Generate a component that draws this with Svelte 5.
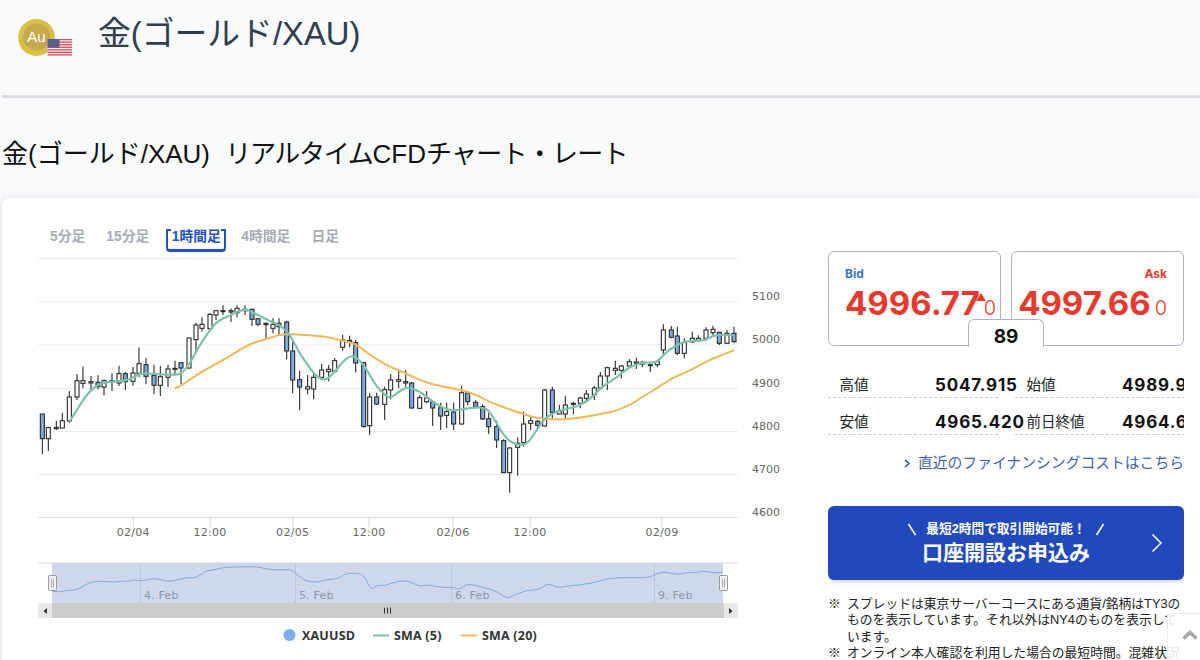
<script>
  const g1 = [[37,372,492,372,446,1],[55,410,483,413,446,0],[79,392,420,412,416,0],[97,368,415,392,414,0],[118,303,398,321,393,0],[141,252,330,272,321,0],[159,230,295,272,280,0],[183,258,302,275,279,0],[204,256,298,277,290,1],[222,268,316,272,291,0],[246,250,303,272,276,0],[267,227,288,251,279,0],[286,246,300,251,275,1],[309,231,287,249,274,0],[327,172,262,221,250,0],[348,204,283,224,259,1],[372,224,313,256,286,1],[391,228,318,260,286,0],[414,224,291,237,262,0],[435,212,252,235,238,0],[453,216,282,218,234,1],[477,144,236,144,234,0],[498,98,185,105,149,0],[516,82,125,103,115,0],[540,70,118,73,116,0],[558,60,90,62,75,0],[579,46,75,62,65,0],[603,55,96,62,66,0],[621,46,82,55,68,0],[645,46,75,58,62,0],[666,56,108,58,88,1],[684,84,108,86,103,1],[708,97,145,100,104,0],[729,85,130,103,115,0],[747,85,135,100,110,0],[770,92,208,96,183,1]];
  const g2 = [[38,157,310,183,270,1],[59,242,360,269,291,1],[83,255,313,290,297,0],[101,252,327,262,297,0],[125,222,265,240,262,0],[146,225,274,238,245,0],[164,204,250,212,244,0],[188,134,182,150,172,0],[209,137,172,151,155,0],[227,150,247,158,219,1],[251,215,413,218,409,1],[269,310,435,321,407,0],[290,308,345,321,342,1],[314,290,390,299,343,0],[332,252,328,270,300,0],[356,243,295,269,274,0],[377,240,290,275,279,0],[395,276,356,279,354,1],[419,316,357,323,355,0],[440,303,340,324,335,0],[458,333,408,336,354,1],[482,338,420,353,378,1],[500,338,415,365,376,0],[521,338,420,366,402,1],[545,287,404,308,402,0],[563,305,345,309,335,1],[587,330,356,337,349,1],[608,343,390,350,387,1],[626,368,432,386,410,1],[650,392,474,410,450,1],[671,448,548,452,548,1],[689,472,608,474,548,0],[713,442,557,460,472,0],[731,365,470,402,458,0],[752,380,420,392,400,0],[773,390,415,394,406,1]];
  const g3 = [[74,297,410,300,408,0],[97,290,390,300,367,1],[118,345,373,364,372,0],[136,318,385,345,372,0],[160,335,373,340,343,0],[181,320,355,324,340,0],[199,300,335,312,325,0],[223,288,330,294,314,0],[241,246,298,258,294,0],[262,230,300,233,258,0],[286,212,255,235,241,0],[304,225,265,228,241,0],[328,207,234,215,228,0],[349,203,237,216,220,0],[367,212,232,217,222,0],[391,222,246,224,226,0],[412,210,232,215,224,0],[430,103,195,120,180,0],[454,108,145,120,142,1],[472,110,196,138,190,1],[493,145,205,157,190,0],[517,125,158,145,156,0],[535,136,156,145,152,0],[558,112,152,120,145,0],[579,107,140,118,128,0],[598,125,165,127,160,1],[621,120,160,130,160,0],[642,110,158,130,155,1]];

  const scale = (arr, ox) => arr.map(c => ({
    x: ox + c[0] / 3,
    wt: 290 + c[1] / 3,
    wb: 290 + c[2] / 3,
    bt: 290 + c[3] / 3,
    bb: 290 + c[4] / 3,
    down: c[5] === 1
  }));
  const candles = [...scale(g1, 30), ...scale(g2, 280), ...scale(g3, 520)];

  const pts = (arr, ox, oy) => arr.map(p => [ox + p[0] / 3, oy + p[1] / 3]);
  const smooth = (p) => {
    let d = `M${p[0][0].toFixed(1)} ${p[0][1].toFixed(1)}`;
    for (let i = 1; i < p.length - 1; i++) {
      const mx = (p[i][0] + p[i + 1][0]) / 2;
      const my = (p[i][1] + p[i + 1][1]) / 2;
      d += ` Q${p[i][0].toFixed(1)} ${p[i][1].toFixed(1)} ${mx.toFixed(1)} ${my.toFixed(1)}`;
    }
    const l = p[p.length - 1];
    return d + ` L${l[0].toFixed(1)} ${l[1].toFixed(1)}`;
  };

  const sma5 = smooth([
    ...pts([[118,395],[141,360],[159,330],[183,300],[204,285],[222,278],[246,275],[267,273],[286,272],[309,263],[327,252],[348,250],[372,252],[391,253],[414,254],[435,254],[453,252],[477,225],[498,185],[516,155],[540,120],[558,98],[579,85],[603,75],[621,65],[645,58],[666,66],[684,75],[708,87],[729,97],[747,105],[770,122]], 30, 290),
    ...pts([[38,150],[59,190],[83,225],[101,250],[125,270],[146,265],[164,245],[188,215],[209,198],[227,200],[251,225],[269,255],[290,290],[314,315],[332,325],[356,305],[377,293],[395,295],[419,305],[440,320],[458,335],[482,350],[500,358],[521,362],[545,358],[563,355],[587,352],[608,353],[626,360],[650,400],[671,435],[689,455],[713,465],[731,463]], 280, 290),
    ...pts([[25,458],[53,415],[74,385],[97,372],[118,362],[136,358],[160,352],[181,345],[199,335],[223,315],[241,295],[262,280],[286,265],[304,250],[328,232],[349,224],[367,218],[391,218],[412,216],[430,195],[454,175],[472,165],[493,155],[517,153],[535,153],[558,148],[579,138],[598,135],[621,135],[642,135]], 520, 290)
  ]);
  const sma20 = smooth([
    ...pts([[435,295],[453,288],[477,270],[498,257],[516,245],[540,232],[579,210],[621,185],[645,170],[666,160],[708,147],[747,135]], 30, 290),
    ...pts([[20,132],[59,134],[83,136],[125,138],[146,142],[188,152],[227,162],[251,180],[290,208],[332,232],[377,250],[419,270],[458,283],[500,292],[545,300],[587,313],[626,335],[671,352],[713,367]], 280, 290),
    ...pts([[60,387],[118,388],[160,386],[223,376],[286,364],[340,340],[367,320],[412,295],[454,265],[493,250],[535,228],[579,205],[621,190],[642,180]], 520, 290)
  ]);
  const navPts = [
    ...pts([[66,243],[90,247],[105,241],[140,240],[160,228],[185,214],[220,214],[250,217],[270,214],[295,214],[310,209],[335,214],[375,203],[412,216],[450,208],[475,202],[497,205],[530,180],[555,180],[580,171],[640,171],[680,169],[710,178],[760,180],[785,178],[820,212],[860,218],[890,208],[925,208],[945,190],[995,190],[1010,210],[1023,241],[1040,225],[1065,228],[1100,213]], 30, 510),
    ...pts([[30,213],[55,230],[80,224],[130,233],[165,232],[180,240],[200,220],[250,232],[295,245],[320,268],[340,255],[355,252],[380,240],[420,240],[443,218],[470,234],[505,228],[580,220],[620,205],[690,202],[750,204],[785,182],[830,195],[860,187],[890,188],[910,182],[945,190],[968,186]], 400, 510)
  ];
  const navLine = smooth(navPts);

  const grid = [302, 345, 388.5, 431.5, 474.5];
  const yLabels = [[5100, 300], [5000, 343], [4900, 386.5], [4800, 429.5], [4700, 472.5], [4600, 515.5]];
  const xLabels = [[133.3, '02/04'], [210, '12:00'], [292.7, '02/05'], [369, '12:00'], [453, '02/06'], [530, '12:00'], [662, '02/09']];
  const navMarks = [[140.5, '4. Feb'], [295.5, '5. Feb'], [451.5, '6. Feb'], [654.5, '9. Feb']];
  const tabs = ['5分足', '15分足', '1時間足', '4時間足', '日足'];
  const flagStripes = [0, 1, 2, 3, 4, 5, 6];
</script>

<div class="page">
  <header class="head">
    <svg class="icon" viewBox="0 0 54 37" width="54" height="37" aria-hidden="true">
      <circle cx="18.5" cy="18.5" r="18.4" fill="#dcbf45" />
      <circle cx="18.7" cy="18" r="13.6" fill="#c5aa50" />
      <text x="18.5" y="22.5" class="au">Au</text>
      <rect x="29.5" y="20" width="24.5" height="16.5" fill="#f4ecec" />
      {#each flagStripes as s}
        <rect x="29.5" y={20 + s * 2.54} width="24.5" height="1.27" fill="#d2505f" />
      {/each}
      <rect x="29.5" y="20" width="12" height="8.6" fill="#55608f" />
    </svg>
    <h1>金(ゴールド/XAU)</h1>
  </header>

  <h2>金(ゴールド/XAU) <span class="k1">リアルタイム</span>CFD<span class="k2">チャート・レート</span></h2>

  <section class="card">
    <div class="chart-col">
      <nav class="tabs">
        {#each tabs as t, i}
          <span class="tab" class:active={i === 2}>{t}</span>
        {/each}
      </nav>
      <svg class="chart" viewBox="30 258 760 402" width="760" height="402">
        <line x1="38" x2="738" y1="258.5" y2="258.5" class="grid" />
        {#each grid as y}
          <line x1="38" x2="738" y1={y} y2={y} class="grid" />
        {/each}
        <line x1="38" x2="738" y1="517.5" y2="517.5" class="axis" />
        {#each xLabels as l}
          <line x1={l[0]} x2={l[0]} y1="517" y2="527" class="axis" />
          <text x={l[0]} y="536" class="xl">{l[1]}</text>
        {/each}
        {#each yLabels as l}
          <text x="752" y={l[1]} class="yl">{l[0]}</text>
        {/each}

        {#each candles as c}
          <line x1={c.x} x2={c.x} y1={c.wt} y2={c.wb} class="wick" />
          <rect x={c.x - 2} y={c.bt} width="4" height={Math.max(c.bb - c.bt, 1)} class={c.down ? 'body down' : 'body'} />
        {/each}
        <path d={sma20} class="sma20" />
        <path d={sma5} class="sma5" />

        <line x1="38" x2="738" y1="563" y2="563" class="navtop" />
        <rect x="52" y="563" width="671" height="40" class="navbg" />
        {#each navMarks as m}
          <line x1={m[0]} x2={m[0]} y1="563" y2="603" class="navgrid" />
          <text x={m[0] + 3.5} y="599" class="navl">{m[1]}</text>
        {/each}
        <path d={navLine} class="navline" />

        <rect x="38" y="603" width="700" height="15" class="sb" />
        <rect x="38" y="603" width="14" height="15" class="sbbtn" />
        <rect x="724" y="603" width="14" height="15" class="sbbtn" />
        <path d="M47 608 L43.5 611 L47 614 Z" class="arrow" />
        <path d="M729 608 L732.5 611 L729 614 Z" class="arrow" />
        <path d="M384.5 607.5v6M387.5 607.5v6M390.5 607.5v6" class="grip" />

        <rect x="48.5" y="575.5" width="8" height="15" rx="1" class="handle" />
        <path d="M51.5 578.5v9M53.5 578.5v9" class="hgrip" />
        <rect x="719.5" y="575.5" width="8" height="15" rx="1" class="handle" />
        <path d="M722.5 578.5v9M724.5 578.5v9" class="hgrip" />

        <circle cx="289.5" cy="635" r="6" class="dot" />
        <text x="302" y="640" class="lg">XAUUSD</text>
        <line x1="373" x2="389" y1="635.5" y2="635.5" class="lg5" />
        <text x="394" y="640" class="lg">SMA (5)</text>
        <line x1="461" x2="477" y1="635.5" y2="635.5" class="lg20" />
        <text x="482" y="640" class="lg">SMA (20)</text>
      </svg>
    </div>

    <aside class="side">
      <div class="quotes">
        <div class="quote">
          <div class="q-label bid">Bid</div>
          <div class="q-price"><span class="big">4996.77</span><span class="small">0</span></div>
          <i class="tri"></i>
        </div>
        <div class="quote">
          <div class="q-label ask">Ask</div>
          <div class="q-price end"><span class="big">4997.66</span><span class="small">0</span></div>
        </div>
        <div class="spread">89</div>
      </div>

      <dl class="stats">
        <div class="stat"><dt>高値</dt><dd>5047.915</dd></div>
        <div class="stat"><dt>始値</dt><dd>4989.935</dd></div>
        <div class="stat"><dt>安値</dt><dd>4965.420</dd></div>
        <div class="stat"><dt>前日終値</dt><dd>4964.625</dd></div>
      </dl>

      <div class="link">
        <svg viewBox="0 0 6 9" width="6" height="9" aria-hidden="true"><path d="M1 .8 5 4.5 1 8.2" /></svg>
        <span>直近のファイナンシングコストはこちら</span>
      </div>

      <div class="cta">
        <div class="cta-text">
          <div class="cta-sub">
            <svg viewBox="0 0 10 13" width="10" height="13" aria-hidden="true"><path d="M1.5 1 8.5 12" /></svg>
            <span>最短2時間で取引開始可能！</span>
            <svg viewBox="0 0 10 13" width="10" height="13" aria-hidden="true"><path d="M8.5 1 1.5 12" /></svg>
          </div>
          <div class="cta-main">口座開設お申込み</div>
        </div>
        <svg class="cta-arrow" viewBox="0 0 12 20" width="12" height="20" aria-hidden="true"><path d="M1.5 1.5 10 10 1.5 18.5" /></svg>
      </div>

      <ul class="notes">
        <li><span class="mark">※</span><span>スプレッドは東京サーバーコースにある通貨/銘柄はTY3の<br />ものを表示しています。それ以外はNY4のものを表示して<br />います。</span></li>
        <li><span class="mark">※</span><span>オンライン本人確認を利用した場合の最短時間。混雑状況</span></li>
      </ul>
    </aside>
  </section>

  <button class="top" aria-label="top">
    <svg viewBox="0 0 16 10" width="16" height="10"><path d="M1.5 8.5 8 2.5l6.5 6" /></svg>
  </button>
</div>

<style>
  :global(html), :global(body) {
    margin: 0;
    height: 660px;
    overflow: hidden;
    background: #f9fafc;
  }
  .page {
    height: 660px;
    overflow: hidden;
    background: #f9fafc;
    font-family: "Liberation Sans", "Noto Sans CJK JP", sans-serif;
    color: #111;
  }
  .head {
    display: flex;
    align-items: flex-start;
    gap: 26px;
    height: 95px;
    margin-left: 2px;
    padding-left: 16px;
    border-bottom: 3px solid #dcdde1;
  }
  .icon { margin-top: 19px; flex: none; }
  .au {
    font: 400 15px "Liberation Sans", sans-serif;
    fill: #fff;
    text-anchor: middle;
  }
  h1 {
    margin: 14px 0 0;
    font-size: 32.8px;
    line-height: 40px;
    font-weight: 400;
    color: #2f3e50;
    white-space: nowrap;
  }
  h2 {
    margin: 36px 0 24px 2px;
    font-size: 26px;
    line-height: 40px;
    font-weight: 400;
    color: #111;
    white-space: nowrap;
  }
  .k1 { margin-left: 8px; letter-spacing: -1.33px; }
  .k2 { letter-spacing: -.75px; }
  .card {
    display: flex;
    margin-left: 2px;
    height: 480px;
    background: #fff;
    border-radius: 8px 0 0 0;
    box-shadow: 0 0 8px rgba(40, 50, 80, .14);
  }
  .chart-col {
    flex: none;
    width: 788px;
    padding-left: 28px;
    box-sizing: border-box;
  }
  .tabs {
    display: flex;
    gap: 11px;
    height: 60px;
    box-sizing: border-box;
    padding: 31px 0 0 15px;
  }
  .tab {
    position: relative;
    height: 23px;
    padding: 1px 5px 0;
    box-sizing: border-box;
    font-size: 13.8px;
    font-weight: 700;
    line-height: 14px;
    color: #a5acb6;
    white-space: nowrap;
  }
  .tab.active {
    margin: 0 -1px 0 1px;
    padding: 1px 3.5px 0;
    color: #2453bd;
    border: 2px solid #2453bd;
    border-top: 0;
    border-bottom-width: 3px;
    border-radius: 0 0 4px 4px;
  }
  .tab.active::before,
  .tab.active::after {
    content: "";
    position: absolute;
    top: 0;
    width: 5px;
    height: 2px;
    background: #2453bd;
  }
  .tab.active::before { left: -2px; border-radius: 2px 0 0 0; }
  .tab.active::after { right: -2px; border-radius: 0 2px 0 0; }
  .chart { display: block; }
  .grid { stroke: #ececf0; stroke-width: 1.2; }
  .axis { stroke: #d9deea; stroke-width: 1.2; }
  .xl, .yl, .navl { font-family: "DejaVu Sans", sans-serif; font-size: 11px; }
  .xl { fill: #666; text-anchor: middle; letter-spacing: .3px; }
  .yl { fill: #666; }
  .wick { stroke: #2a2a2a; stroke-width: 1.1; }
  .body { fill: #fff; stroke: #2a2a2a; stroke-width: 1.1; }
  .body.down { fill: #7cabe0; }
  .sma5 { fill: none; stroke: #7cc0ae; stroke-width: 2.2; stroke-linejoin: round; }
  .sma20 { fill: none; stroke: #f2b75a; stroke-width: 2; stroke-linejoin: round; }
  .navtop { stroke: #d5d8e2; }
  .navbg { fill: #ced8ea; }
  .navgrid { stroke: #bcc6da; }
  .navl { fill: #8d96a8; letter-spacing: .2px; }
  .navline { fill: none; stroke: #86a6da; stroke-width: 1; }
  .sb { fill: #cccccc; }
  .sbbtn { fill: #e8e8e8; }
  .arrow { fill: #333; }
  .grip { stroke: #333; stroke-width: 1; fill: none; }
  .handle { fill: #f2f2f2; stroke: #999; }
  .hgrip { stroke: #aaa; fill: none; }
  .dot { fill: #7eaeea; }
  .lg { font: 700 12.5px "Open Sans", sans-serif; fill: #333; letter-spacing: .2px; }
  .lg5 { stroke: #7cc0ae; stroke-width: 2; }
  .lg20 { stroke: #f2b75a; stroke-width: 2; }

  .side {
    flex: none;
    width: 356px;
    margin-left: 38px;
    padding-top: 53px;
    overflow: hidden;
  }
  .quotes {
    position: relative;
    display: grid;
    grid-template-columns: 173px 173px;
    gap: 10px;
    height: 95px;
  }
  .quote {
    position: relative;
    box-sizing: border-box;
    height: 95px;
    padding: 14px 16px 0;
    border: 1px solid #aab3cb;
    border-radius: 6px;
    background: #fff;
  }
  .q-label {
    font: 700 12px/16px "Inter", sans-serif;
  }
  .q-label.bid { color: #3a72c0; }
  .q-label.ask { color: #e8392c; text-align: right; }
  .q-price {
    display: flex;
    align-items: baseline;
    gap: 4px;
    margin-top: 3px;
    color: #e8392c;
    white-space: nowrap;
    font-family: "Inter", sans-serif;
    line-height: 36px;
  }
  .q-price.end { justify-content: flex-end; }
  .big { font-size: 33px; font-weight: 700; }
  .small { font-size: 20px; font-weight: 300; }
  .tri {
    position: absolute;
    left: 147px;
    top: 41px;
    width: 10px;
    height: 8px;
    background: #e8392c;
    clip-path: polygon(50% 0, 100% 100%, 0 100%);
  }
  .spread {
    position: absolute;
    left: 140px;
    top: 68px;
    width: 76px;
    height: 28px;
    box-sizing: border-box;
    border: 1px solid #aab3cb;
    border-bottom: 0;
    border-radius: 6px 6px 0 0;
    background: #fff;
    text-align: center;
    font: 700 19px/33px "Inter", sans-serif;
    color: #111;
  }
  .stats {
    display: grid;
    grid-template-columns: 170px 170px;
    column-gap: 17px;
    margin: 15px 0 0;
  }
  .stat {
    display: flex;
    height: 37px;
    box-sizing: border-box;
    padding: 14px 0 0 11.5px;
    border-bottom: 1px dashed #c9ccd2;
    white-space: nowrap;
  }
  dt { flex: none; width: 95.5px; font-size: 14.5px; line-height: 20px; color: #222; }
  dd { margin: 1px 0 0; font: 700 17px/18px "Inter", sans-serif; letter-spacing: .8px; color: #111; }
  .link {
    display: flex;
    justify-content: flex-end;
    align-items: center;
    gap: 8px;
    margin-top: 18px;
    font-size: 14.8px;
    line-height: 20px;
    color: #3a62b8;
    white-space: nowrap;
  }
  .link svg path { fill: none; stroke: #3a62b8; stroke-width: 1.6; }
  .cta {
    position: relative;
    display: flex;
    align-items: center;
    justify-content: center;
    box-sizing: border-box;
    height: 74px;
    margin-top: 33px;
    padding-top: 2px;
    border-radius: 6px;
    background: #2149bd;
    color: #fff;
    box-shadow: 0 2px 4px rgba(30, 50, 120, .2);
  }
  .cta-text { text-align: center; }
  .cta-sub {
    display: flex;
    justify-content: center;
    align-items: center;
    gap: 9px;
    font-size: 12.7px;
    font-weight: 700;
    line-height: 18px;
    white-space: nowrap;
  }
  .cta-sub path { fill: none; stroke: #fff; stroke-width: 1.6; }
  .cta-main { font-size: 21px; font-weight: 700; line-height: 30px; }
  .cta-arrow { position: absolute; right: 21px; top: 27px; }
  .cta-arrow path { fill: none; stroke: #fff; stroke-width: 1.5; }
  .notes {
    list-style: none;
    margin: 16px 0 0;
    padding: 0;
    font-size: 12.8px;
    line-height: 16.3px;
    color: #222;
    white-space: nowrap;
  }
  .notes li { display: flex; }
  .mark { flex: none; width: 19px; }
  .top {
    position: fixed;
    right: 0;
    top: 613px;
    width: 33px;
    height: 47px;
    padding: 0;
    background: rgba(255, 255, 255, .88);
    border: 1px solid #ececec;
    border-right: 0;
    border-bottom: 0;
    border-radius: 4px 0 0 0;
    display: flex;
    align-items: center;
    justify-content: center;
  }
  .top svg { margin-left: 12px; margin-top: -4px; }
  .top path { fill: none; stroke: #a8a8a8; stroke-width: 3.6; }
</style>
